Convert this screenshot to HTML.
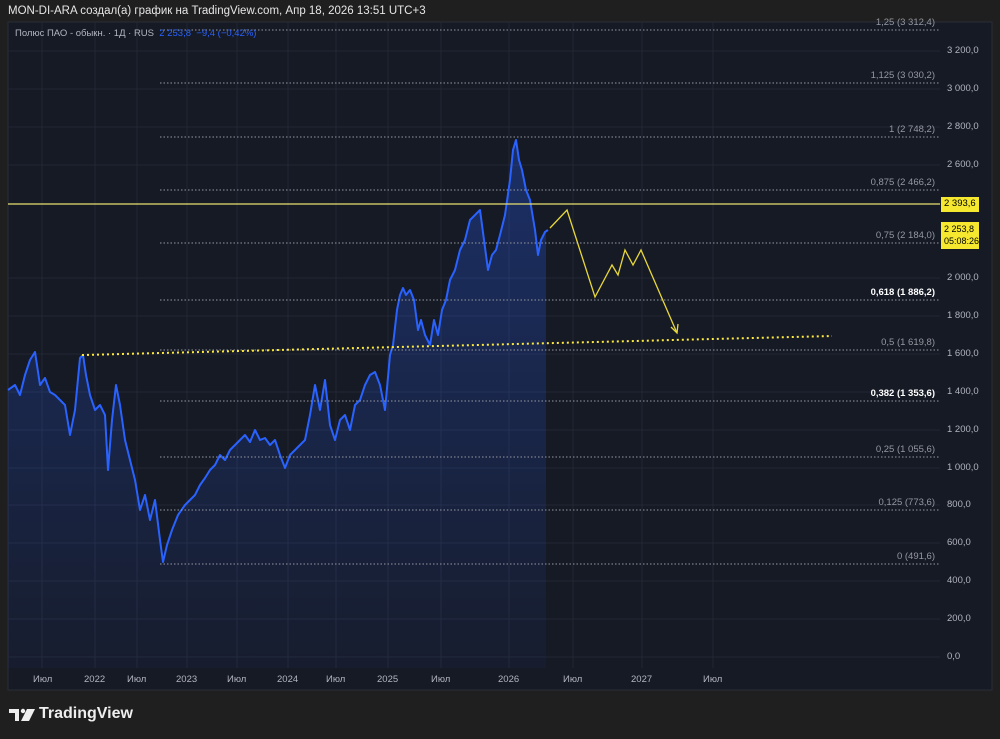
<!DOCTYPE html>
<html><head><meta charset="utf-8"><style>
body{margin:0;width:1000px;height:739px;background:#1f1f1f;font-family:"Liberation Sans","DejaVu Sans",sans-serif;overflow:hidden;position:relative}
.t{position:absolute;white-space:nowrap}
</style></head><body>
<div class="t" style="left:8px;top:5px;color:#e6e6e6;font-size:11.5px">MON-DI-ARA создал(а) график на TradingView.com, Апр 18, 2026 13:51 UTC+3</div>
<svg style="position:absolute;left:0;top:0" width="1000" height="739">
<defs><linearGradient id="g" x1="0" y1="0" x2="0" y2="1"><stop offset="0" stop-color="#2962ff" stop-opacity="0.3"/><stop offset="1" stop-color="#2962ff" stop-opacity="0.04"/></linearGradient></defs>
<rect x="8" y="22" width="984" height="668" fill="#161a25" stroke="#2a2e39"/>
<g stroke="#232735" stroke-width="1">
<line x1="42" y1="22" x2="42" y2="668"/><line x1="95" y1="22" x2="95" y2="668"/><line x1="137" y1="22" x2="137" y2="668"/><line x1="187" y1="22" x2="187" y2="668"/><line x1="237" y1="22" x2="237" y2="668"/><line x1="288" y1="22" x2="288" y2="668"/><line x1="336" y1="22" x2="336" y2="668"/><line x1="388" y1="22" x2="388" y2="668"/><line x1="441" y1="22" x2="441" y2="668"/><line x1="509" y1="22" x2="509" y2="668"/><line x1="573" y1="22" x2="573" y2="668"/><line x1="642" y1="22" x2="642" y2="668"/><line x1="713" y1="22" x2="713" y2="668"/>
<line x1="8" y1="51" x2="940" y2="51"/><line x1="8" y1="89" x2="940" y2="89"/><line x1="8" y1="127" x2="940" y2="127"/><line x1="8" y1="165" x2="940" y2="165"/><line x1="8" y1="278" x2="940" y2="278"/><line x1="8" y1="316" x2="940" y2="316"/><line x1="8" y1="354" x2="940" y2="354"/><line x1="8" y1="392" x2="940" y2="392"/><line x1="8" y1="430" x2="940" y2="430"/><line x1="8" y1="468" x2="940" y2="468"/><line x1="8" y1="505" x2="940" y2="505"/><line x1="8" y1="543" x2="940" y2="543"/><line x1="8" y1="581" x2="940" y2="581"/><line x1="8" y1="619" x2="940" y2="619"/><line x1="8" y1="657" x2="940" y2="657"/>
</g>
<polygon fill="url(#g)" points="8,390 15,385 20,395 25,375 30,360 35,352 40,385 45,378 50,392 55,395 60,400 65,405 70,435 75,410 80,358 83,355 86,375 90,395 95,410 100,405 105,415 108,470 112,420 116,385 120,405 125,440 130,460 135,480 140,510 145,495 150,520 155,500 160,540 163,562 167,545 172,530 178,515 185,505 190,500 195,495 200,485 205,478 210,470 215,465 220,455 225,460 230,450 240,440 245,435 250,442 255,430 260,440 265,438 270,445 275,440 280,455 285,468 290,455 295,450 300,445 305,440 310,415 315,385 320,410 325,380 330,425 335,440 340,420 345,415 350,430 355,405 360,400 365,385 370,375 375,372 380,385 385,410 390,355 393,345 397,310 400,295 403,288 406,295 410,290 414,300 418,330 421,320 425,335 430,345 434,320 438,335 442,310 446,300 450,280 455,270 460,250 465,240 470,220 475,215 480,210 484,240 488,270 492,255 496,250 500,235 505,215 510,180 513,150 516,140 519,160 522,170 526,190 530,200 535,230 538,255 541,240 545,232 546,232 546,668 8,668"/>
<polyline fill="none" stroke="#2962ff" stroke-width="2" stroke-linejoin="round" points="8,390 15,385 20,395 25,375 30,360 35,352 40,385 45,378 50,392 55,395 60,400 65,405 70,435 75,410 80,358 83,355 86,375 90,395 95,410 100,405 105,415 108,470 112,420 116,385 120,405 125,440 130,460 135,480 140,510 145,495 150,520 155,500 160,540 163,562 167,545 172,530 178,515 185,505 190,500 195,495 200,485 205,478 210,470 215,465 220,455 225,460 230,450 240,440 245,435 250,442 255,430 260,440 265,438 270,445 275,440 280,455 285,468 290,455 295,450 300,445 305,440 310,415 315,385 320,410 325,380 330,425 335,440 340,420 345,415 350,430 355,405 360,400 365,385 370,375 375,372 380,385 385,410 390,355 393,345 397,310 400,295 403,288 406,295 410,290 414,300 418,330 421,320 425,335 430,345 434,320 438,335 442,310 446,300 450,280 455,270 460,250 465,240 470,220 475,215 480,210 484,240 488,270 492,255 496,250 500,235 505,215 510,180 513,150 516,140 519,160 522,170 526,190 530,200 535,230 538,255 541,240 545,232 548,230"/>
<g stroke="#9598a1" stroke-dasharray="1.5 2" stroke-width="1">
<line x1="160" y1="30" x2="940" y2="30"/><line x1="160" y1="83" x2="940" y2="83"/><line x1="160" y1="137" x2="940" y2="137"/><line x1="160" y1="190" x2="940" y2="190"/><line x1="160" y1="243" x2="940" y2="243"/><line x1="160" y1="300" x2="940" y2="300"/><line x1="160" y1="350" x2="940" y2="350"/><line x1="160" y1="401" x2="940" y2="401"/><line x1="160" y1="457" x2="940" y2="457"/><line x1="160" y1="510" x2="940" y2="510"/><line x1="160" y1="564" x2="940" y2="564"/>
</g>
<line x1="8" y1="204" x2="940" y2="204" stroke="#e8e070" stroke-width="1.3"/>
<line x1="82" y1="355" x2="832" y2="336" stroke="#ffeb3b" stroke-width="2" stroke-dasharray="2 3"/>
<polyline fill="none" stroke="#e8d83a" stroke-width="1.3" points="550,228 567,210 595,297 612,265 618,275 625,250 633,265 641,250 677,333"/>
<polyline fill="none" stroke="#e8d83a" stroke-width="1.3" points="671,327 677,333 678,324"/>
<rect x="941" y="197" width="38" height="15" fill="#f5e82e"/>
<rect x="941" y="222" width="38" height="27" fill="#f5e82e"/>
<path d="M9 709H19V721H15V713H9Z" fill="#eee"/><circle cx="23" cy="711" r="2.2" fill="#eee"/><path d="M27 709H35L29 721H21Z" fill="#eee"/>
</svg>
<div class="t" style="left:15px;top:28px;font-size:9.5px;color:#b2b5be">Полюс ПАО - обыкн. · 1Д · RUS <span style="color:#2962ff">&nbsp;2 253,8 &nbsp;−9,4 (−0,42%)</span></div>
<div style="position:absolute;left:0;top:0;width:1000px;height:739px;font-size:9.5px;color:#9598a1">
<div class="t" style="right:65px;top:17px">1,25 (3 312,4)</div>
<div class="t" style="right:65px;top:70px">1,125 (3 030,2)</div>
<div class="t" style="right:65px;top:124px">1 (2 748,2)</div>
<div class="t" style="right:65px;top:177px">0,875 (2 466,2)</div>
<div class="t" style="right:65px;top:230px">0,75 (2 184,0)</div>
<div class="t" style="right:65px;top:287px;color:#fff;font-weight:bold">0,618 (1 886,2)</div>
<div class="t" style="right:65px;top:337px">0,5 (1 619,8)</div>
<div class="t" style="right:65px;top:388px;color:#fff;font-weight:bold">0,382 (1 353,6)</div>
<div class="t" style="right:65px;top:444px">0,25 (1 055,6)</div>
<div class="t" style="right:65px;top:497px">0,125 (773,6)</div>
<div class="t" style="right:65px;top:551px">0 (491,6)</div>
</div>
<div style="position:absolute;left:947px;top:0;font-size:9.5px;color:#b2b5be">
<div class="t" style="top:45px">3 200,0</div><div class="t" style="top:83px">3 000,0</div><div class="t" style="top:121px">2 800,0</div><div class="t" style="top:159px">2 600,0</div><div class="t" style="top:272px">2 000,0</div><div class="t" style="top:310px">1 800,0</div><div class="t" style="top:348px">1 600,0</div><div class="t" style="top:386px">1 400,0</div><div class="t" style="top:424px">1 200,0</div><div class="t" style="top:462px">1 000,0</div><div class="t" style="top:499px">800,0</div><div class="t" style="top:537px">600,0</div><div class="t" style="top:575px">400,0</div><div class="t" style="top:613px">200,0</div><div class="t" style="top:651px">0,0</div>
</div>
<div class="t" style="left:944px;top:198px;font-size:9.5px;color:#000">2 393,6</div>
<div class="t" style="left:944px;top:223px;font-size:9px;color:#000;line-height:12px">2 253,8<br>05:08:26</div>
<div style="position:absolute;top:674px;left:0;font-size:9.5px;color:#b2b5be">
<div class="t" style="left:33px">Июл</div><div class="t" style="left:84px">2022</div><div class="t" style="left:127px">Июл</div><div class="t" style="left:176px">2023</div><div class="t" style="left:227px">Июл</div><div class="t" style="left:277px">2024</div><div class="t" style="left:326px">Июл</div><div class="t" style="left:377px">2025</div><div class="t" style="left:431px">Июл</div><div class="t" style="left:498px">2026</div><div class="t" style="left:563px">Июл</div><div class="t" style="left:631px">2027</div><div class="t" style="left:703px">Июл</div>
</div>
<div class="t" style="left:39px;top:705px;font-size:16px;font-weight:bold;color:#eee">TradingView</div>
</body></html>
